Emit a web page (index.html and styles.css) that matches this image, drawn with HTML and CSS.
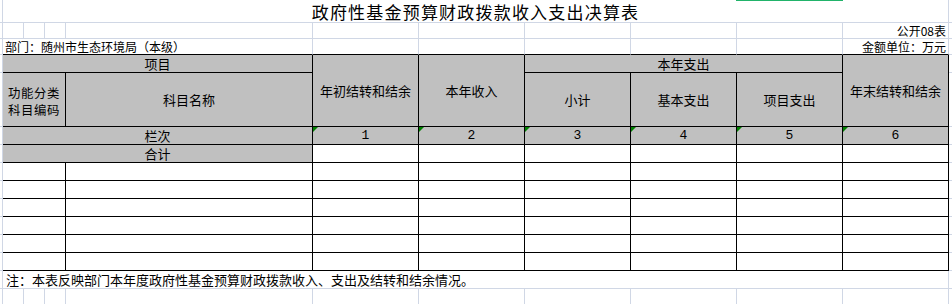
FILE: index.html
```html
<!DOCTYPE html>
<html lang="zh-CN">
<head>
<meta charset="utf-8">
<title>政府性基金预算财政拨款收入支出决算表</title>
<link rel="stylesheet" href="styles.css">
</head>
<body>
<div class="sheet">
  <!-- r0 title -->
  <div class="c"></div>
  <div class="c s10 title">政府性基金预算财政拨款收入支出决算表<span class="sel"></span></div>
  <div class="c"></div>
  <!-- r1 -->
  <div class="c"></div>
  <div class="c"></div><div class="c"></div><div class="c"></div><div class="c"></div>
  <div class="c"></div><div class="c"></div><div class="c"></div><div class="c"></div><div class="c"></div>
  <div class="c meta right">公开08表</div>
  <div class="c"></div>
  <!-- r2 -->
  <div class="c"></div>
  <div class="c s4 bb meta left">部门：随州市生态环境局（本级）</div>
  <div class="c bb"></div><div class="c bb"></div><div class="c bb"></div><div class="c bb"></div><div class="c bb"></div>
  <div class="c bb meta right">金额单位：万元</div>
  <div class="c"></div>
  <!-- r3 -->
  <div class="c"></div>
  <div class="c t g s4">项目</div>
  <div class="c t g rs2">年初结转和结余</div>
  <div class="c t g rs2">本年收入</div>
  <div class="c t g s3">本年支出</div>
  <div class="c t g rs2">年末结转和结余</div>
  <div class="c"></div>
  <!-- r4 -->
  <div class="c"></div>
  <div class="c t g s3 two"><span class="ln">功能分类</span><span class="ln">科目编码</span></div>
  <div class="c t g">科目名称</div>
  <div class="c t g">小计</div>
  <div class="c t g">基本支出</div>
  <div class="c t g">项目支出</div>
  <div class="c"></div>
  <!-- r5 -->
  <div class="c"></div>
  <div class="c t g s4">栏次</div>
  <div class="c t g tri num">1</div>
  <div class="c t g tri num">2</div>
  <div class="c t g tri num">3</div>
  <div class="c t g tri num">4</div>
  <div class="c t g tri num">5</div>
  <div class="c t g tri num">6</div>
  <div class="c"></div>
  <!-- r6 -->
  <div class="c"></div>
  <div class="c t g s4">合计</div>
  <div class="c t"></div><div class="c t"></div><div class="c t"></div><div class="c t"></div><div class="c t"></div><div class="c t"></div>
  <div class="c"></div>
  <!-- data rows -->
  <div class="c"></div><div class="c t s3"></div><div class="c t"></div><div class="c t"></div><div class="c t"></div><div class="c t"></div><div class="c t"></div><div class="c t"></div><div class="c t"></div><div class="c"></div>
  <div class="c"></div><div class="c t s3"></div><div class="c t"></div><div class="c t"></div><div class="c t"></div><div class="c t"></div><div class="c t"></div><div class="c t"></div><div class="c t"></div><div class="c"></div>
  <div class="c"></div><div class="c t s3"></div><div class="c t"></div><div class="c t"></div><div class="c t"></div><div class="c t"></div><div class="c t"></div><div class="c t"></div><div class="c t"></div><div class="c"></div>
  <div class="c"></div><div class="c t s3"></div><div class="c t"></div><div class="c t"></div><div class="c t"></div><div class="c t"></div><div class="c t"></div><div class="c t"></div><div class="c t"></div><div class="c"></div>
  <div class="c"></div><div class="c t s3"></div><div class="c t"></div><div class="c t"></div><div class="c t"></div><div class="c t"></div><div class="c t"></div><div class="c t"></div><div class="c t"></div><div class="c"></div>
  <div class="c"></div><div class="c t s3"></div><div class="c t"></div><div class="c t"></div><div class="c t"></div><div class="c t"></div><div class="c t"></div><div class="c t"></div><div class="c t"></div><div class="c"></div>
  <!-- r13 note -->
  <div class="c"></div>
  <div class="c s10 note">注：本表反映部门本年度政府性基金预算财政拨款收入、支出及结转和结余情况。</div>
  <div class="c"></div>
  <!-- r14 -->
  <div class="c"></div>
  <div class="c"></div><div class="c"></div><div class="c"></div><div class="c"></div>
  <div class="c"></div><div class="c"></div><div class="c"></div><div class="c"></div><div class="c"></div><div class="c"></div>
  <div class="c"></div>
</div>
</body>
</html>
```

FILE: styles.css
```css
html, body {
  margin: 0;
  padding: 0;
  background: #fff;
  overflow: hidden;
}

body {
  font-family: "Noto Sans CJK SC", "Noto Sans", sans-serif;
  color: #000;
}

.sheet {
  display: grid;
  width: 952px;
  overflow: hidden;
  grid-template-columns: 3px 21px 21px 21px 247px repeat(6, 106px) 60px;
  grid-template-rows: 23px 16px 16px 18px 54px 18px 18px repeat(6, 18px) 18px 20px;
}

.c {
  box-sizing: border-box;
  min-width: 0;
  border-right: 1px solid #d0d7e5;
  border-bottom: 1px solid #d0d7e5;
  display: flex;
  align-items: center;
  justify-content: center;
  font-size: 13px;
  line-height: 16px;
  white-space: nowrap;
}

.t {
  border-right-color: #000;
  border-bottom-color: #000;
  background: #fff;
}

.g {
  background: #c0c0c0;
}

.bb {
  border-bottom-color: #000;
}

.s3 { grid-column: span 3; }
.s4 { grid-column: span 4; }
.s10 { grid-column: span 10; }
.rs2 { grid-row: span 2; }

.title {
  position: relative;
  padding-top: 2px;
  font-size: 17px;
  line-height: 20px;
  letter-spacing: 1.2px;
}

.sel {
  position: absolute;
  left: 733px;
  top: 0;
  width: 107px;
  height: 1px;
  background: #21b36a;
}

.meta {
  font-size: 12px;
  line-height: 14px;
  align-items: flex-end;
}

.right {
  justify-content: flex-end;
  padding-right: 2px;
}

.left {
  justify-content: flex-start;
  padding-left: 2px;
}

.two {
  flex-direction: column;
  padding-top: 2px;
}

.ln {
  display: block;
  font-size: 12.4px;
  letter-spacing: 0.6px;
  line-height: 18px;
  height: 17px;
}

.num {
  font-family: "Liberation Mono", "DejaVu Sans Mono", monospace;
  font-size: 13px;
}

.tri {
  position: relative;
}

.tri::before {
  content: "";
  position: absolute;
  left: 0;
  top: 0;
  border-top: 5px solid #008000;
  border-right: 5px solid transparent;
}

.note {
  justify-content: flex-start;
  align-items: flex-end;
  padding-left: 3px;
  font-size: 13px;
  line-height: 16px;
}
```
